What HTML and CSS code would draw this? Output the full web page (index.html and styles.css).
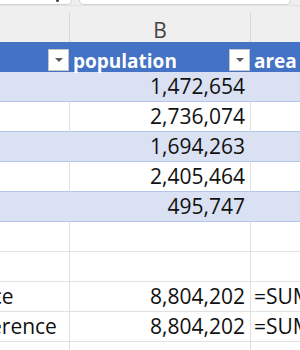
FILE: index.html
```html
<!DOCTYPE html>
<html lang="en">
<head>
    <meta charset="UTF-8">
    <meta name="viewport" content="width=device-width, initial-scale=1.0">
    <title>Sheet - population</title>
    <link rel="stylesheet" href="styles.css">
</head>
<body>

    <!-- Sheet tabs strip (scrolled, only bottom edge shows) -->
    <div class="tabs">
        <div class="tab tab-first"><span class="tab-mark"></span></div>
        <div class="tab tab-second"></div>
    </div>

    <div class="viewport">
        <div class="sheet">
            <!-- Column letters -->
            <div class="row col-heads">
                <div class="cell">A</div>
                <div class="cell">B</div>
                <div class="cell">C</div>
            </div>

            <!-- Table header -->
            <div class="row table-head">
                <div class="cell head-a"><span class="filter"></span></div>
                <div class="cell head-b">population<span class="filter"></span></div>
                <div class="cell head-c">area</div>
            </div>

            <!-- Table body -->
            <div class="row band">
                <div class="cell">Philadelphia</div>
                <div class="cell num">1,472,654</div>
                <div class="cell"></div>
            </div>
            <div class="row plain">
                <div class="cell">Brooklyn</div>
                <div class="cell num">2,736,074</div>
                <div class="cell"></div>
            </div>
            <div class="row band">
                <div class="cell">Manhattan</div>
                <div class="cell num">1,694,263</div>
                <div class="cell"></div>
            </div>
            <div class="row plain">
                <div class="cell">Queens</div>
                <div class="cell num">2,405,464</div>
                <div class="cell"></div>
            </div>
            <div class="row band">
                <div class="cell">Staten Island</div>
                <div class="cell num">495,747</div>
                <div class="cell"></div>
            </div>

            <!-- Plain grid below the table -->
            <div class="row grid">
                <div class="cell"></div>
                <div class="cell"></div>
                <div class="cell"></div>
            </div>
            <div class="row grid">
                <div class="cell"></div>
                <div class="cell"></div>
                <div class="cell"></div>
            </div>
            <div class="row grid">
                <div class="cell label">Range reference</div>
                <div class="cell num">8,804,202</div>
                <div class="cell formula">=SUM(B3:B7)</div>
            </div>
            <div class="row grid">
                <div class="cell label">Structured reference</div>
                <div class="cell num">8,804,202</div>
                <div class="cell formula">=SUM(Table1[population])</div>
            </div>
            <div class="row grid">
                <div class="cell"></div>
                <div class="cell"></div>
                <div class="cell"></div>
            </div>
        </div>
    </div>

</body>
</html>
```

FILE: styles.css
```css
:root {
    --head-blue: #4472c4;
    --band-blue: #d9e1f2;
    --line-blue: #b4c6e7;
    --grid-line: #e1e1e1;
    --chrome-bg: #efefef;
    --txt-color: #111;
}

* {
    box-sizing: border-box;
}

body {
    font-family: 'Open Sans', 'Liberation Sans', sans-serif;
    background-color: #fff;
    margin: 0;
    padding: 0;
    width: 300px;
    height: 350px;
    overflow: hidden;
}

/* Sheet tabs */
.tabs {
    display: flex;
    height: 6px;
    background-color: var(--chrome-bg);
    border-bottom: 1px solid #e2e2e2;
}

.tab {
    position: relative;
    height: 5px;
    background-color: #fff;
    border: 1px solid #d2d2d2;
    border-top: none;
    border-radius: 0 0 6px 6px;
}

.tab-first {
    width: 80px;
    margin-left: -8px;
}

.tab-second {
    width: 212px;
    margin-left: 7px;
}

.tab-mark {
    position: absolute;
    left: 63px;
    top: 0;
    width: 3px;
    height: 2px;
    border-radius: 0 0 2px 2px;
    background-color: #444;
}

/* Grid */
.viewport {
    overflow: hidden;
}

.sheet {
    margin-left: -150px;
    width: 550px;
}

.row {
    display: grid;
    grid-template-columns: 220px 181px 149px;
    height: 30px;
}

.cell {
    font-size: 21px;
    line-height: 29px;
    color: var(--txt-color);
    white-space: nowrap;
    border-right: 1px solid var(--grid-line);
    border-bottom: 1px solid var(--grid-line);
    padding: 0 3px;
}

.num {
    text-align: right;
    padding-right: 5px;
}

/* Column letters */
.col-heads {
    height: 36px;
    background-color: var(--chrome-bg);
}

.col-heads .cell {
    margin-top: 7px;
    height: 29px;
    line-height: 34px;
    text-align: center;
    color: #444;
    border-right-color: #d6d6d6;
    border-bottom: none;
}

/* Table header */
.table-head {
    background-color: var(--head-blue);
}

.table-head .cell {
    display: flex;
    align-items: flex-end;
    font-size: 19px;
    font-weight: 700;
    color: #fff;
    line-height: 22px;
    border: none;
}

.head-a {
    justify-content: flex-end;
    padding-right: 1px;
}

.head-b {
    padding-right: 1px;
}

.head-b .filter {
    margin-left: auto;
}

.filter {
    display: flex;
    justify-content: center;
    align-items: center;
    width: 21px;
    height: 22px;
    margin-bottom: 1px;
    background-color: #fff;
    border: 1px solid #c6c6c6;
}

.filter::after {
    content: '';
    border-left: 4px solid transparent;
    border-right: 4px solid transparent;
    border-top: 4px solid #595959;
}

/* Table body */
.band {
    background-color: var(--band-blue);
}

.band .cell {
    border-right-color: var(--band-blue);
    border-bottom-color: var(--line-blue);
}

.plain .cell {
    border-bottom-color: var(--line-blue);
}

.band .cell:first-child,
.plain .cell:first-child {
    color: transparent;
}
```
